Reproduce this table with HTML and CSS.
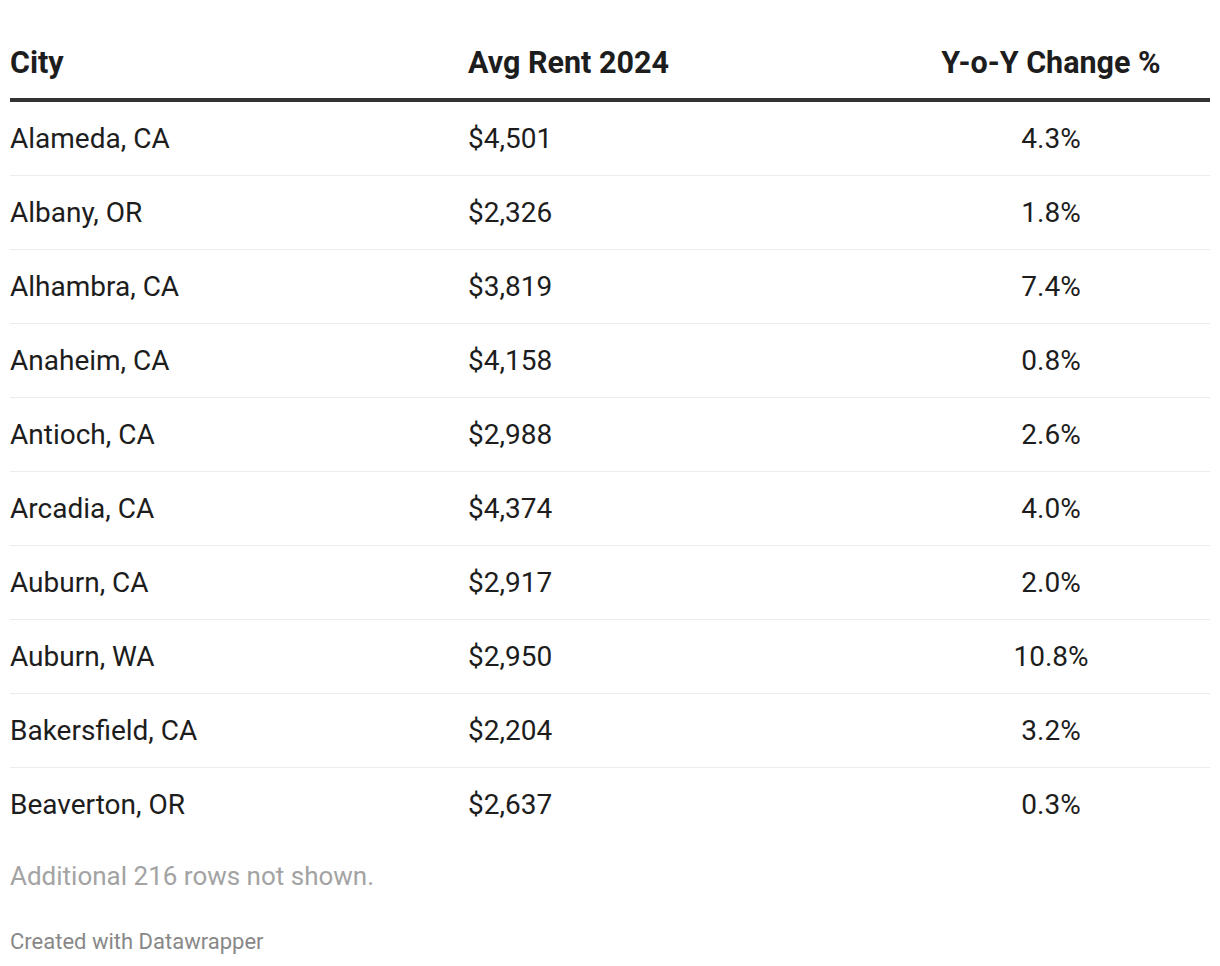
FILE: index.html
```html
<!DOCTYPE html>
<html>
<head>
<meta charset="utf-8">
<link rel="stylesheet" href="styles.css">
</head>
<body>
<div class="chart">
  <table class="data">
    <colgroup><col class="c1"><col class="c2"><col class="c3"></colgroup>
    <thead>
      <tr><th>City</th><th>Avg Rent 2024</th><th class="ctr">Y-o-Y Change %</th></tr>
    </thead>
    <tbody>
      <tr><td>Alameda, CA</td><td>$4,501</td><td class="ctr">4.3%</td></tr>
      <tr><td>Albany, OR</td><td>$2,326</td><td class="ctr">1.8%</td></tr>
      <tr><td>Alhambra, CA</td><td>$3,819</td><td class="ctr">7.4%</td></tr>
      <tr><td>Anaheim, CA</td><td>$4,158</td><td class="ctr">0.8%</td></tr>
      <tr><td>Antioch, CA</td><td>$2,988</td><td class="ctr">2.6%</td></tr>
      <tr><td>Arcadia, CA</td><td>$4,374</td><td class="ctr">4.0%</td></tr>
      <tr><td>Auburn, CA</td><td>$2,917</td><td class="ctr">2.0%</td></tr>
      <tr><td>Auburn, WA</td><td>$2,950</td><td class="ctr">10.8%</td></tr>
      <tr><td>Bakersfield, CA</td><td>$2,204</td><td class="ctr">3.2%</td></tr>
      <tr><td>Beaverton, OR</td><td>$2,637</td><td class="ctr">0.3%</td></tr>
    </tbody>
  </table>
  <div class="note">Additional 216 rows not shown.</div>
  <div class="credit">Created with Datawrapper</div>
</div>
</body>
</html>
```
FILE: styles.css
```css
html, body {
  margin: 0;
  padding: 0;
  background: #fff;
}
.chart {
  padding: 0 10px;
  font-family: Roboto, "Liberation Sans", sans-serif;
  color: #1d1d1d;
}
.data {
  width: 1200px;
  border-collapse: collapse;
  table-layout: fixed;
}
.c1 { width: 458px; }
.c2 { width: 424px; }
.c3 { width: 318px; }
.data th {
  font-size: 30.5px;
  line-height: 34px;
  font-weight: 700;
  text-align: left;
  color: #1d1d1d;
  padding: 46px 0 18px 0;
  border-bottom: 4px solid #333;
}
.data td {
  font-size: 28px;
  line-height: 34px;
  padding: 20px 0 19px 0;
  border-bottom: 1px solid #ececec;
}
.data tbody tr:last-child td {
  border-bottom: none;
}
.data .ctr {
  text-align: center;
}
.note {
  margin-top: 18px;
  font-size: 26px;
  line-height: 34px;
  color: #a3a3a3;
}
.credit {
  margin-top: 36px;
  font-size: 22px;
  line-height: 26px;
  color: #888;
}
```
